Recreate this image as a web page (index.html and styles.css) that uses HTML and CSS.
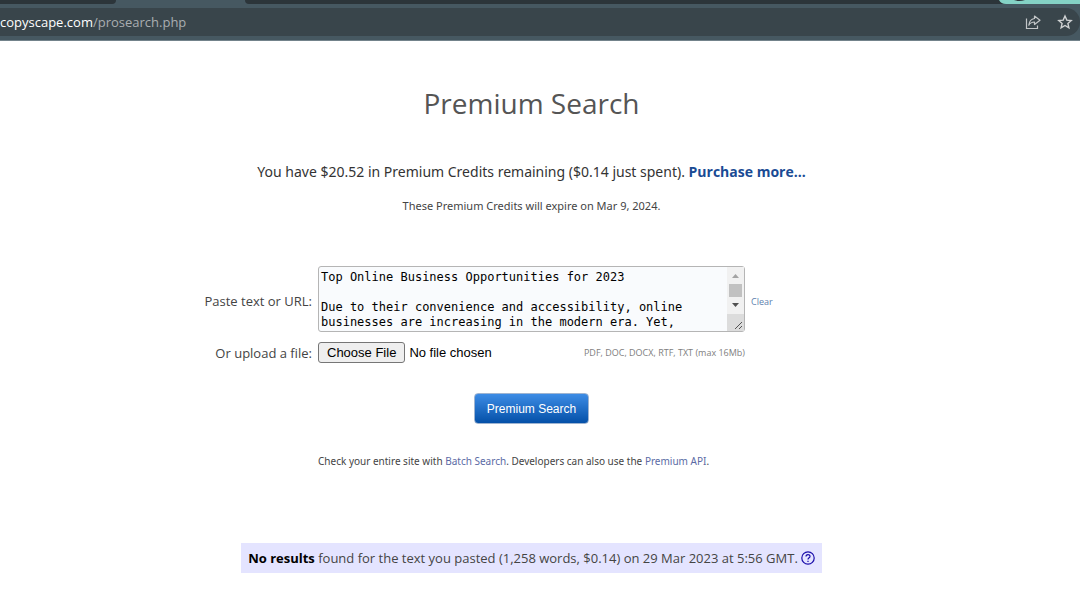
FILE: index.html
```html
<!DOCTYPE html>
<html lang="en">
<head>
<meta charset="utf-8">
<title>Premium Search</title>
<link rel="stylesheet" href="styles.css">
</head>
<body>
<header class="browser">
  <div class="tabs">
    <div class="tab tab-left"></div>
    <div class="tab tab-right"></div>
    <svg class="profile" width="81" height="4" viewBox="0 0 81 4" aria-hidden="true"><path d="M0 0H81V4H7Q2 4 0 0Z" fill="#84d2c5"/><path d="M15 0H26Q20 2 15 0Z" fill="#2c353a"/></svg>
  </div>
  <div class="address">
    <div class="url"><span class="host">copyscape.com</span>/prosearch.php</div>
    <button class="tool" type="button" aria-label="Share">
      <svg width="16" height="16" viewBox="0 0 16 16" fill="none" stroke="#c3c6c8" stroke-width="1.2"><path d="M1.5 4.5V14.5H12.5V11.5"/><path d="M9.5 2L15 6.2L9.5 10.5V8C7 8 5 9 3.8 11.2C4.2 7.5 6 5 9.5 4.5Z" stroke-linejoin="round"/></svg>
    </button>
    <button class="tool" type="button" aria-label="Bookmark">
      <svg width="16" height="16" viewBox="0 0 16 16" fill="none" stroke="#d0d2d3" stroke-width="1.4"><path d="M8 2L9.8 6.1L14.2 6.5L10.9 9.4L11.9 13.8L8 11.5L4.1 13.8L5.1 9.4L1.8 6.5L6.2 6.1Z"/></svg>
    </button>
  </div>
</header>
<main class="page">
  <h1 class="title">Premium Search</h1>
  <p class="credits">You have $20.52 in Premium Credits remaining ($0.14 just spent). <a class="purchase" href="#">Purchase more...</a></p>
  <p class="expiry">These Premium Credits will expire on Mar 9, 2024.</p>
  <form class="search">
    <label class="label" for="text">Paste text or URL:</label>
    <div class="paste">
      <textarea class="text" id="text" spellcheck="false">Top Online Business Opportunities for 2023

Due to their convenience and accessibility, online businesses are increasing in the modern era. Yet,</textarea>
      <svg class="scroll" width="17" height="64" viewBox="0 0 17 64" aria-hidden="true"><path d="M0 0H17V47H0Z" fill="#f1f1f1"/><path d="M0 47H17V64H0Z" fill="#dcdcdc"/><path d="M5 11L8.5 7L12 11Z" fill="#a3a3a3"/><path d="M2 17H15V30H2Z" fill="#c1c1c1"/><path d="M5 36L8.5 40L12 36Z" fill="#505050"/><path d="M8 62L15 55M12 62L15 59" stroke="#555" fill="none"/></svg>
    </div>
    <a class="clear" href="#">Clear</a>
    <label class="label label-file" for="file">Or upload a file:</label>
    <div class="upload">
      <input class="file" id="file" type="file">
      <span class="formats">PDF, DOC, DOCX, RTF, TXT (max 16Mb)</span>
    </div>
    <button class="submit" type="button">Premium Search</button>
    <p class="more">Check your entire site with <a href="#">Batch Search</a>. Developers can also use the <a href="#">Premium API</a>.</p>
  </form>
  <div class="result">
    <span><strong>No results</strong> found for the text you pasted (1,258 words, $0.14) on 29 Mar 2023 at 5:56 GMT.</span>
    <a class="help" href="#" aria-label="Help"><svg width="14" height="14" viewBox="0 0 14 14" fill="none" stroke="#1a0dab" stroke-width="1.2"><circle cx="7" cy="7" r="6.2"/><path d="M5 5.6C5 2.9 9 2.9 9 5.4C9 6.8 7 6.8 7 8.6M7 9.8V11"/></svg></a>
  </div>
</main>
</body>
</html>
```

FILE: styles.css
```css
* { box-sizing: border-box; }
body {
  margin: 0;
  background: #fff;
  color: #444;
  font-family: "Open Sans", sans-serif;
  font-size: 13px;
}
a { text-decoration: none; color: #5b6ba5; }
p, h1 { margin: 0; }

.browser {
  background: #465861;
  border-bottom: 1px solid #73838b;
}
.tabs {
  display: flex;
  height: 8px;
  position: relative;
}
.tab { height: 4px; background: #2c353a; }
.tab-left { width: 116px; border-bottom-right-radius: 6px; }
.tab-right { flex: 1; margin-left: 129px; border-bottom-left-radius: 6px; }
.profile { position: absolute; right: 0; top: 0; }
.address {
  display: flex;
  align-items: center;
  gap: 16px;
  height: 28px;
  margin-bottom: 4px;
  padding-right: 7px;
  background: #39454b;
  border-radius: 0 14px 14px 0;
}
.url {
  flex: 1;
  color: #a9aeb1;
  font-size: 13px;
}
.host { color: #fff; }
.tool {
  display: flex;
  padding: 0;
  border: 0;
  background: none;
}

.page {
  display: flex;
  flex-direction: column;
  align-items: center;
  padding: 41px 17px 16px 0;
}
.title {
  color: #555;
  font-size: 28px;
  font-weight: 400;
  line-height: 42px;
}
.credits {
  margin-top: 36px;
  color: #333;
  font-family: "Noto Sans", sans-serif;
  font-size: 14px;
  line-height: 24px;
}
.purchase {
  color: #1a4b94;
  font-family: "Open Sans", sans-serif;
  font-weight: 700;
}
.expiry {
  margin-top: 12px;
  font-family: "Noto Sans", sans-serif;
  font-size: 11px;
  line-height: 20px;
}
.search {
  display: grid;
  grid-template-columns: 1fr 427px 1fr;
  column-gap: 6px;
  align-items: center;
  width: 100%;
  margin-top: 50px;
}
.label { text-align: right; line-height: 20px; padding-top: 4px; }
.label-file { margin-top: 7px; }
.paste { position: relative; display: flex; }
.text {
  width: 100%;
  height: 66px;
  padding: 3px 20px 0 2px;
  border: 1px solid #b5b5b5;
  border-radius: 3px;
  background: #f9fbfd;
  color: #000;
  font-family: "DejaVu Sans Mono", monospace;
  font-size: 12px;
  line-height: 15px;
  resize: none;
  overflow: hidden;
}
.scroll { position: absolute; right: 1px; top: 1px; }
.clear { font-size: 9px; padding-top: 4px; color: #5d7fae; }
.upload {
  display: flex;
  align-items: center;
  justify-content: space-between;
  margin-top: 9px;
}
.file {
  width: 240px;
  color: #000;
  font-family: "Liberation Sans", Arial, sans-serif;
  font-size: 13px;
}
.file::file-selector-button {
  height: 21px;
  padding: 0 8px;
  border: 1px solid #767676;
  border-radius: 3px;
  background: #efefef;
  color: #000;
  font: inherit;
}
.formats { color: #808080; font-size: 9px; }
.submit {
  grid-column: 2;
  justify-self: center;
  height: 31px;
  margin-top: 30px;
  padding: 0 12px;
  border: 1px solid #9eb4d1;
  border-radius: 4px;
  background: linear-gradient(#3d8ce5, #0450a8);
  color: #fff;
  font-family: "Liberation Sans", Arial, sans-serif;
  font-size: 12px;
}
.more {
  grid-column: 2;
  margin-top: 28px;
  font-family: "Noto Sans", sans-serif;
  font-size: 10px;
  line-height: 18px;
}
.result {
  display: flex;
  align-items: center;
  gap: 3px;
  margin-top: 73px;
  padding: 0 7px;
  background: #e4e4ff;
  line-height: 30px;
}
.result strong { color: #000; }
.help { display: flex; }
```
